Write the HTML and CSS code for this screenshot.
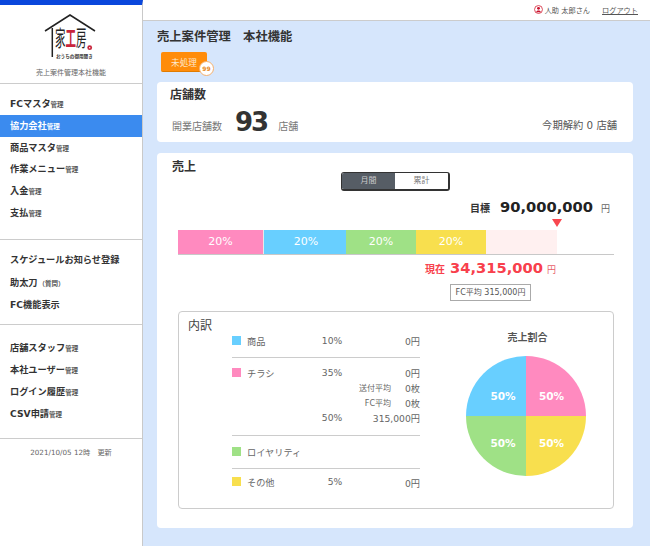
FILE: index.html
```html
<!DOCTYPE html>
<html lang="ja">
  <head>
    <meta charset="utf-8">
    <title>売上案件管理</title>
    <link rel="stylesheet" href="styles.css">
  </head>
  <body>
    <div class="layout">
      <aside class="sidebar">
        <div class="brand">
          <svg class="logo" width="54" height="46" viewBox="0 0 54 46">
            <path d="M1 18 L26 2 L51 18" fill="none" stroke="#222" stroke-width="1.5"/>
            <path d="M8.3 15 V44" fill="none" stroke="#222" stroke-width="1.5"/>
            <text class="logo-text" transform="translate(11 33) scale(1.05 2.2)">家<tspan class="logo-red">工</tspan>房</text>
            <text x="12" y="45" class="logo-small">おうちの御用聞き</text>
            <circle cx="45.7" cy="34.7" r="2.4" fill="#c8253c"/>
            <circle cx="45.7" cy="34.7" r="0.7" fill="#fff"/>
          </svg>
          <p class="brand-name">売上案件管理本社機能</p>
        </div>
        <ul class="nav nav-first">
          <li>FCマスタ<small>管理</small></li>
          <li class="active">協力会社<small>管理</small></li>
          <li>商品マスタ<small>管理</small></li>
          <li>作業メニュー<small>管理</small></li>
          <li>入金<small>管理</small></li>
          <li>支払<small>管理</small></li>
        </ul>
        <ul class="nav nav-second">
          <li>スケジュールお知らせ登録</li>
          <li>助太刀<small class="paren">（質問）</small></li>
          <li>FC機能表示</li>
        </ul>
        <ul class="nav nav-third">
          <li>店舗スタッフ<small>管理</small></li>
          <li>本社ユーザー<small>管理</small></li>
          <li>ログイン履歴<small>管理</small></li>
          <li>CSV申請<small>管理</small></li>
        </ul>
        <p class="updated">2021/10/05 12時　更新</p>
      </aside>

      <div class="content">
        <header class="topbar">
          <svg class="user-icon" width="9" height="9" viewBox="0 0 10 10">
            <circle cx="5" cy="5" r="4.4" fill="#fff" stroke="#d8394a" stroke-width="1"/>
            <circle cx="5" cy="3.7" r="1.6" fill="#c8102e"/>
            <path d="M2.4 8 C2.4 5.6 7.6 5.6 7.6 8 Z" fill="#c8102e"/>
          </svg>
          <span class="user-name">人助 太郎さん</span>
          <a class="logout">ログアウト</a>
        </header>

        <main class="main">
          <h1 class="page-title">売上案件管理　本社機能</h1>
          <div class="pending-row">
            <button class="pending">未処理<span class="badge">99</span></button>
          </div>

          <section class="card store-card">
            <h2 class="card-title">店舗数</h2>
            <div class="store-row">
              <span class="store-label">開業店舗数</span>
              <span class="store-count">93</span>
              <span class="store-label">店舗</span>
              <span class="store-cancel">今期解約 0 店舗</span>
            </div>
          </section>

          <section class="card sales-card">
            <h2 class="card-title sales-title">売上</h2>
            <div class="toggle">
              <span class="toggle-item toggle-on">月間</span>
              <span class="toggle-item">累計</span>
            </div>
            <div class="goal">
              <span class="goal-label">目標</span>
              <span class="goal-value">90,000,000</span>
              <span class="goal-unit">円</span>
            </div>
            <div class="bar">
              <div class="seg seg-pink">20%</div>
              <div class="seg seg-blue">20%</div>
              <div class="seg seg-green">20%</div>
              <div class="seg seg-yellow">20%</div>
              <div class="seg seg-rest"><i class="marker"></i></div>
            </div>
            <div class="current">
              <span class="current-label">現在</span>
              <span class="current-value">34,315,000</span>
              <span class="current-unit">円</span>
            </div>
            <div class="fc-row"><span class="fc-avg">FC平均 315,000円</span></div>

            <div class="detail">
              <div class="detail-left">
                <h3 class="detail-title">内訳</h3>
                <div class="rows">
                  <div class="group group-1">
                    <div class="row">
                      <i class="swatch sw-blue"></i><span class="name">商品</span>
                      <span class="pct">10%</span><span class="amt">0円</span>
                    </div>
                  </div>
                  <div class="group group-2">
                    <div class="row">
                      <i class="swatch sw-pink"></i><span class="name">チラシ</span>
                      <span class="pct">35%</span><span class="amt">0円</span>
                    </div>
                    <div class="row sub"><span class="sub-label">送付平均</span><span class="sub-val">0枚</span></div>
                    <div class="row sub"><span class="sub-label">FC平均</span><span class="sub-val">0枚</span></div>
                    <div class="row sub-amt">
                      <span class="spacer"></span>
                      <span class="pct">50%</span><span class="amt">315,000円</span>
                    </div>
                  </div>
                  <div class="group group-3">
                    <div class="row">
                      <i class="swatch sw-green"></i><span class="name">ロイヤリティ</span>
                    </div>
                  </div>
                  <div class="group group-4">
                    <div class="row">
                      <i class="swatch sw-yellow"></i><span class="name">その他</span>
                      <span class="pct pct-low">5%</span><span class="amt amt-low">0円</span>
                    </div>
                  </div>
                </div>
              </div>
              <div class="detail-right">
                <h3 class="pie-title">売上割合</h3>
                <div class="pie">
                  <span>50%</span><span>50%</span><span>50%</span><span>50%</span>
                </div>
              </div>
            </div>
          </section>
        </main>
      </div>
    </div>
  </body>
</html>
```

FILE: styles.css
```css
* {
  box-sizing: border-box;
}

html, body {
  margin: 0;
  height: 100%;
}

body {
  font-family: "DejaVu Sans", "Noto Sans CJK JP", sans-serif;
  color: #333;
  overflow: hidden;
}

h1, h2, h3, p, ul {
  margin: 0;
  padding: 0;
}

.layout {
  display: flex;
  height: 546px;
}

/* sidebar */
.sidebar {
  width: 143px;
  flex: none;
  border-top: 5px solid #0a47dc;
  border-right: 1px solid #c9c9c9;
  background: #fff;
}

.brand {
  height: 79px;
  padding-top: 8px;
  text-align: center;
  border-bottom: 1px solid #ccc;
}

.logo {
  display: block;
  margin: 0 auto;
}

.logo-text {
  font-family: "Noto Sans CJK JP", sans-serif;
  font-size: 10px;
  fill: #222;
}

.logo-red {
  fill: #c8253c;
  font-weight: 700;
}

.logo-small {
  font-family: "Noto Sans CJK JP", sans-serif;
  font-size: 4.6px;
  font-weight: 700;
  fill: #333;
}

.brand-name {
  margin-top: 8px;
  font-size: 7px;
  line-height: 12px;
  color: #666;
}

.nav {
  list-style: none;
  border-bottom: 1px solid #ccc;
}

.nav li {
  height: 21.8px;
  padding-left: 10px;
  font-size: 9.2px;
  line-height: 21.8px;
  font-weight: 700;
  color: #333;
  white-space: nowrap;
}

.nav small {
  font-size: 6.5px;
  font-weight: 700;
  color: #555;
}

.nav .paren {
  margin-left: 1px;
}

.nav li.active {
  background: #3b8bef;
  color: #fff;
}

.nav li.active small {
  color: #fff;
}

.nav-first {
  padding: 9px 0 15px;
}

.nav-second {
  padding: 9px 0 6.6px;
}

.nav-second li {
  height: 22.8px;
}

.nav-third {
  padding: 12px 0 13.2px;
}

.nav-third li {
  height: 22px;
}

.updated {
  margin-top: 8px;
  font-size: 7.2px;
  line-height: 12px;
  text-align: center;
  color: #666;
}

/* top */
.content {
  flex: 1;
  min-width: 0;
  display: flex;
  flex-direction: column;
}

.topbar {
  height: 21px;
  flex: none;
  display: flex;
  align-items: center;
  justify-content: flex-end;
  padding: 0 12px 1px 0;
  font-size: 7.2px;
  color: #555;
  background: #fff;
  border-bottom: 1px solid #ccc;
}

.user-icon {
  margin-right: 2px;
}

.logout {
  margin-left: 12px;
  text-decoration: underline;
}

.main {
  flex: 1;
  background: #d6e6fc;
  padding: 8px 17px 0 14px;
}

.page-title {
  font-size: 12.3px;
  line-height: 16px;
  font-weight: 700;
  color: #333;
}

.pending-row {
  margin: 7px 0 10px 4px;
}

.pending {
  position: relative;
  display: block;
  width: 46px;
  height: 20px;
  padding: 0;
  border: 0;
  border-radius: 2px;
  border-bottom: 1px solid #e07b00;
  background: #ff8c0a;
  font-family: inherit;
  font-size: 8.6px;
  color: #fde9d0;
}

.badge {
  position: absolute;
  right: -7px;
  bottom: -5px;
  width: 15px;
  height: 15px;
  border-radius: 50%;
  border: 1px solid #f5b06d;
  background: #fff;
  color: #e88a24;
  font-size: 6px;
  font-weight: 700;
  line-height: 13px;
  text-align: center;
}

/* cards */
.card {
  background: #fff;
  border-radius: 4px;
}

.card-title {
  font-size: 12px;
  line-height: 16px;
  font-weight: 700;
  color: #333;
}

.store-card {
  height: 60px;
  padding: 5px 16px 0 13px;
  margin-bottom: 11px;
}

.store-row {
  display: flex;
  align-items: center;
  height: 30px;
  margin-top: 4px;
  padding-left: 2px;
}

.store-label {
  font-size: 10px;
  color: #777;
  padding-top: 6px;
}

.store-count {
  margin: 0 11px 0 13px;
  font-size: 26px;
  font-weight: 700;
  letter-spacing: -2px;
  color: #333;
}

.store-cancel {
  margin-left: auto;
  font-size: 10.3px;
  color: #555;
  padding-top: 5px;
}

.sales-card {
  height: 375px;
  padding: 6px 19px 0 21px;
}

.sales-title {
  margin-left: -6px;
}

.toggle {
  display: flex;
  width: 109px;
  height: 19px;
  margin: -3px 0 0 163px;
  border: 1px solid #333;
  border-right-width: 2px;
  border-bottom-width: 2px;
  border-radius: 3px;
  overflow: hidden;
  font-size: 8px;
  line-height: 16px;
  text-align: center;
}

.toggle-item {
  flex: 1;
  color: #777;
  background: #fff;
}

.toggle-on {
  background: #565d65;
  color: #ccc;
}

.goal {
  display: flex;
  justify-content: flex-end;
  align-items: baseline;
  height: 24px;
  margin-top: 7px;
  padding-right: 4px;
}

.goal-label {
  font-size: 10px;
  font-weight: 700;
  color: #333;
}

.goal-value {
  margin: 0 8px 0 10px;
  font-size: 14.7px;
  font-weight: 700;
  color: #222;
}

.goal-unit {
  font-size: 9px;
  color: #666;
}

.bar {
  display: flex;
  height: 25px;
  margin-top: 8px;
  border-bottom: 1px solid #c8c8c8;
  font-size: 11px;
  line-height: 24px;
  text-align: center;
  color: #fff;
}

.seg {
  flex: none;
}

.seg-pink {
  width: 86px;
  background: #ff8abf;
  border-right: 1px solid #e8e8e8;
}

.seg-blue {
  width: 82px;
  padding-left: 2px;
  background: #68cfff;
}

.seg-green {
  width: 70px;
  background: #9fe186;
}

.seg-yellow {
  width: 70px;
  background: #f8df4e;
}

.seg-rest {
  position: relative;
  width: 71px;
  background: #fff0f0;
}

.marker {
  position: absolute;
  right: -5px;
  top: -11px;
  border-left: 5px solid transparent;
  border-right: 5px solid transparent;
  border-top: 8px solid #f8474f;
}

.current {
  display: flex;
  justify-content: flex-end;
  align-items: baseline;
  height: 25px;
  margin-top: 4px;
  padding-right: 58px;
  color: #f8404c;
}

.current-label {
  font-size: 10px;
  font-weight: 700;
}

.current-value {
  margin: 0 4px 0 5px;
  font-size: 14.7px;
  font-weight: 700;
}

.current-unit {
  font-size: 9px;
  color: #e8606a;
}

.fc-row {
  display: flex;
  justify-content: flex-end;
  padding-right: 83px;
}

.fc-avg {
  width: 81px;
  height: 17px;
  border: 1px solid #aaa;
  font-size: 8px;
  line-height: 15px;
  text-align: center;
  color: #555;
}

/* breakdown */
.detail {
  display: flex;
  height: 198px;
  margin-top: 10px;
  border: 1px solid #ccc;
  border-radius: 4px;
}

.detail-left {
  width: 241px;
  padding: 6px 0 0 9px;
}

.detail-title {
  font-size: 12px;
  line-height: 16px;
  font-weight: 400;
  color: #444;
}

.rows {
  margin: -1px 0 0 44px;
  font-size: 9.2px;
  color: #666;
}

.group {
  border-bottom: 1px solid #ccc;
}

.group-1 {
  height: 25px;
}

.group-2 {
  height: 78px;
  padding-top: 7px;
}

.group-3 {
  height: 33px;
  padding-top: 8px;
}

.group-4 {
  border-bottom: 0;
  padding-top: 5px;
}

.row {
  display: flex;
  align-items: center;
  height: 15px;
}

.swatch {
  flex: none;
  width: 9px;
  height: 9px;
  margin-right: 6px;
}

.sw-blue { background: #68cfff; }
.sw-pink { background: #ff8abf; }
.sw-green { background: #9fe186; }
.sw-yellow { background: #f8df4e; }

.name {
  width: 71px;
  flex: none;
}

.spacer {
  width: 86px;
  flex: none;
}

.pct {
  width: 28px;
  flex: none;
  text-align: center;
}

.pct-low {
  margin-left: 3px;
}

.amt {
  flex: 1;
  text-align: right;
}

.amt-low {
  padding-top: 3px;
}

.sub {
  justify-content: flex-end;
}

.sub-label {
  font-size: 8px;
}

.sub-val {
  width: 29px;
  text-align: right;
}

.detail-right {
  flex: 1;
  display: flex;
  flex-direction: column;
  align-items: center;
  padding: 19px 0 0 18px;
}

.pie-title {
  margin-left: 4px;
  font-size: 10px;
  line-height: 14px;
  font-weight: 700;
  color: #555;
}

.pie {
  display: grid;
  grid-template-columns: 1fr 1fr;
  grid-template-rows: 1fr 1fr;
  width: 120px;
  height: 120px;
  margin-top: 11px;
  border-radius: 50%;
  background: conic-gradient(#ff8abf 0 25%, #f8df4e 25% 50%, #9fe186 50% 75%, #68cfff 75% 100%);
  color: #fff;
  font-size: 10.5px;
  line-height: 14px;
  font-weight: 700;
  text-align: center;
}

.pie span:nth-child(1) { padding: 33px 0 0 15px; }
.pie span:nth-child(2) { padding: 33px 8px 0 0; }
.pie span:nth-child(3) { padding: 20px 0 0 15px; }
.pie span:nth-child(4) { padding: 20px 8px 0 0; }
```
